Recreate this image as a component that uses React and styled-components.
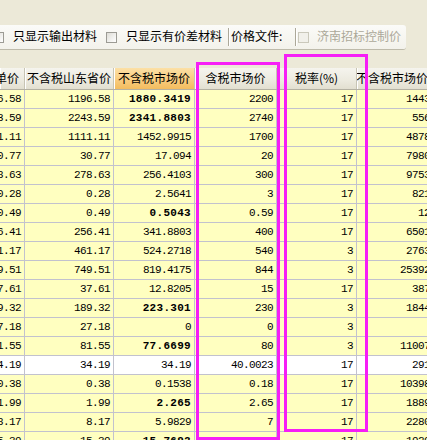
import React from 'react';
import styled, { createGlobalStyle } from 'styled-components';

const GlobalStyle = createGlobalStyle`
  html, body { margin: 0; padding: 0; background: #ECE9D8; }
  body { font-family: "Noto Sans CJK SC", "Liberation Sans", sans-serif; font-size: 12px; color: #000; }
`;

const Page = styled.div`
  position: relative;
  width: 427px;
  height: 440px;
  overflow: hidden;
  background: #ECE9D8;
  display: flex;
  flex-direction: column;
  padding-top: 25px;
  box-sizing: border-box;
`;

const Toolbar = styled.div`
  flex: none;
  width: 406px;
  height: 24px;
  display: flex;
  align-items: center;
  overflow: hidden;
  background: linear-gradient(#FBFBF8, #F3F2EB);
  border-bottom: 1px solid #BDBAAA;
  border-top-right-radius: 3px;
  border-bottom-right-radius: 3px;
`;

const Check = styled.span`
  flex: none;
  width: 11px;
  height: 11px;
  box-sizing: border-box;
  margin-left: ${p => p.$ml || 0}px;
  border: 1px solid ${p => (p.$disabled ? '#CAC8BB' : '#9C9B94')};
  background: ${p => (p.$disabled ? '#F1F0EA' : 'linear-gradient(135deg, #DEDDD6, #FFFFFF)')};
`;

const Label = styled.span`
  flex: none;
  margin-left: ${p => p.$ml || 0}px;
  width: ${p => (p.$w ? `${p.$w}px` : 'auto')};
  color: ${p => (p.$muted ? '#ACA899' : '#000')};
  white-space: nowrap;
  line-height: 16px;
  padding-bottom: 2px;
`;

const Sep = styled.span`
  flex: none;
  width: 1px;
  height: 18px;
  margin-left: ${p => p.$ml || 0}px;
  background: #ACA899;
  border-right: 1px solid #FFFFFF;
`;

const Grid = styled.div`
  flex: none;
  margin-top: 18px;
  width: 452px;
  display: flex;
  flex-direction: column;
`;

const COLS = '25px 89px 81px 82px 80px 95px';

const HeaderRow = styled.div`
  display: grid;
  grid-template-columns: ${COLS};
  height: 22px;
  box-sizing: border-box;
  border-bottom: 1px solid #B4B1A2;
`;

const HeadCell = styled.div`
  display: flex;
  align-items: center;
  justify-content: ${p => (p.$end ? 'flex-end' : 'center')};
  padding-right: ${p => (p.$end ? 5 : 0)}px;
  overflow: hidden;
  white-space: nowrap;
  box-sizing: border-box;
  border-right: 1px solid #C7C4B4;
  box-shadow: inset 1px 0 0 #FFFFFF;
  background: ${p =>
    p.$accent
      ? 'linear-gradient(#FCE0A6, #F8CB7C 60%, #F3BC5E)'
      : 'linear-gradient(#F5F4EE, #ECEADF 60%, #E2DFD0)'};
  line-height: 16px;
  padding-bottom: 1px;
`;

const Row = styled.div`
  display: grid;
  grid-template-columns: ${COLS};
  height: 19px;
`;

const Cell = styled.div`
  display: flex;
  align-items: center;
  justify-content: flex-end;
  overflow: hidden;
  white-space: nowrap;
  box-sizing: border-box;
  padding-right: 3px;
  border-right: 1px solid #C2C2CE;
  border-bottom: 1px solid #C2C2CE;
  background: ${p => (p.$white ? '#FFFFFF' : '#FFFFC0')};
  font-family: "Liberation Mono", "DejaVu Sans Mono", monospace;
  font-size: 11px;
  line-height: 18px;
  font-weight: ${p => (p.$bold ? 700 : 400)};
  letter-spacing: ${p => (p.$bold ? '0.3px' : '-0.6px')};
`;

const Mark = styled.div`
  position: absolute;
  left: ${p => p.$x}px;
  top: ${p => p.$y}px;
  width: 84px;
  height: 378px;
  box-sizing: border-box;
  border: 3px solid #F61EF6;
  pointer-events: none;
`;

const rows = [
  ['1196.58', '1196.58', '1880.3419', true, '2200', '17', '1443.62'],
  ['2243.59', '2243.59', '2341.8803', true, '2740', '17', '5566.2'],
  ['1111.11', '1111.11', '1452.9915', false, '1700', '17', '4878.63'],
  ['30.77', '30.77', '17.094', false, '20', '17', '7980.77'],
  ['278.63', '278.63', '256.4103', false, '300', '17', '9753.85'],
  ['0.28', '0.28', '2.5641', false, '3', '17', '821.37'],
  ['0.49', '0.49', '0.5043', true, '0.59', '17', '12.39'],
  ['256.41', '256.41', '341.8803', false, '400', '17', '6501.71'],
  ['461.17', '461.17', '524.2718', false, '540', '3', '2763.59'],
  ['749.51', '749.51', '819.4175', false, '844', '3', '25392.51'],
  ['37.61', '37.61', '12.8205', false, '15', '17', '387.61'],
  ['189.32', '189.32', '223.301', true, '230', '3', '1844.32'],
  ['27.18', '27.18', '0', false, '0', '3', ''],
  ['81.55', '81.55', '77.6699', true, '80', '3', '11007.83'],
  ['34.19', '34.19', '34.19', false, '40.0023', '17', '291.79', true],
  ['0.38', '0.38', '0.1538', false, '0.18', '17', '10398.72'],
  ['1.99', '1.99', '2.265', true, '2.65', '17', '1889.17'],
  ['8.17', '8.17', '5.9829', false, '7', '17', '2280.34'],
  ['15.39', '15.39', '15.7692', true, '18.45', '17', '1929.49'],
];

export default function App() {
  return (
    <>
      <GlobalStyle />
      <Page>
        <Toolbar>
          <Check $ml={-7} />
          <Label $ml={9}>只显示输出材料</Label>
          <Check $ml={9} />
          <Label $ml={9}>只显示有价差材料</Label>
          <Sep $ml={6} />
          <Label $ml={1} $w={64}>价格文件:</Label>
          <Sep $ml={0} />
          <Check $ml={1} $disabled />
          <Label $ml={8} $muted>济南招标控制价</Label>
        </Toolbar>
        <Grid>
          <HeaderRow>
            <HeadCell $end>含税单价</HeadCell>
            <HeadCell>不含税山东省价</HeadCell>
            <HeadCell $accent>不含税市场价</HeadCell>
            <HeadCell>含税市场价</HeadCell>
            <HeadCell>税率(%)</HeadCell>
            <HeadCell>不含税市场价合计</HeadCell>
          </HeaderRow>
          {rows.map((r, i) => (
            <Row key={i}>
              <Cell $white={r[7]}>{r[0]}</Cell>
              <Cell $white={r[7]}>{r[1]}</Cell>
              <Cell $white={r[7]} $bold={r[3]}>{r[2]}</Cell>
              <Cell $white={r[7]}>{r[4]}</Cell>
              <Cell $white={r[7]}>{r[5]}</Cell>
              <Cell $white={r[7]}>{r[6]}</Cell>
            </Row>
          ))}
        </Grid>
        <Mark $x={196} $y={62} />
        <Mark $x={284} $y={54} />
      </Page>
    </>
  );
}
